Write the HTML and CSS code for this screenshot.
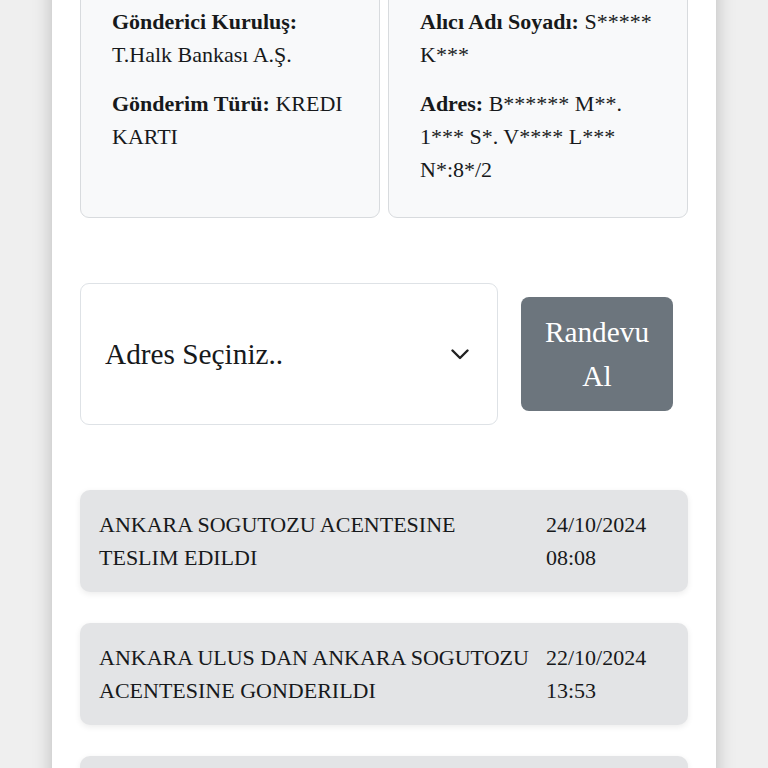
FILE: index.html
```html
<!DOCTYPE html>
<html lang="tr">
<head>
<meta charset="utf-8">
<title>Gönderi Takip</title>
<link rel="stylesheet" href="styles.css">
</head>
<body>
<main class="panel">
  <section class="info-row">
    <div class="info-card">
      <p><b>Gönderici Kuruluş:</b> T.Halk Bankası A.Ş.</p>
      <p><b>Gönderim Türü:</b> KREDI KARTI</p>
    </div>
    <div class="info-card">
      <p><b>Alıcı Adı Soyadı:</b> S***** K***</p>
      <p><b>Adres:</b> B****** M**. 1*** S*. V**** L*** N*:8*/2</p>
    </div>
  </section>

  <section class="address-row">
    <div class="select">
      <span>Adres Seçiniz..</span>
      <svg class="chevron" width="18" height="11" viewBox="0 0 18 11" aria-hidden="true">
        <polyline points="1.5,1.5 9,9 16.5,1.5" fill="none" stroke="#222" stroke-width="2.4" stroke-linecap="round" stroke-linejoin="round"/>
      </svg>
    </div>
    <div class="btn">Randevu Al</div>
  </section>

  <section class="timeline">
    <div class="item">
      <div class="item-text">ANKARA SOGUTOZU ACENTESINE TESLIM EDILDI</div>
      <div class="item-date">24/10/2024 08:08</div>
    </div>
    <div class="item">
      <div class="item-text">ANKARA ULUS DAN ANKARA SOGUTOZU ACENTESINE GONDERILDI</div>
      <div class="item-date">22/10/2024 13:53</div>
    </div>
    <div class="item">
      <div class="item-text">ANKARA ULUS ACENTESINE TESLIM ALINDI</div>
      <div class="item-date">22/10/2024 10:12</div>
    </div>
  </section>
</main>
</body>
</html>
```
FILE: styles.css
```css
html, body {
  margin: 0;
  padding: 0;
}

body {
  background: #efefef;
  font-family: "Liberation Serif", "Times New Roman", serif;
  color: #17191b;
  overflow: hidden;
}

.panel {
  width: 664px;
  min-height: 800px;
  margin: 0 auto;
  background: #ffffff;
  box-shadow: 0 0 18px rgba(0, 0, 0, 0.22);
  padding: 0 28px;
  box-sizing: border-box;
}

.info-row {
  display: grid;
  grid-template-columns: 1fr 1fr;
  gap: 8px;
  margin-top: -27px;
}

.info-card {
  background: #f8f9fa;
  border: 1px solid #d8dbde;
  border-radius: 9px;
  padding: 31px 31px 31px;
  font-size: 22px;
  line-height: 33px;
}

.info-card p {
  margin: 0 0 16px;
}

.info-card p:last-child {
  margin-bottom: 0;
}

.address-row {
  display: flex;
  align-items: center;
  gap: 23px;
  margin-top: 65px;
}

.select {
  flex: 0 0 418px;
  height: 142px;
  box-sizing: border-box;
  border: 1px solid #dee2e6;
  border-radius: 9px;
  background: #fff;
  display: flex;
  align-items: center;
  justify-content: space-between;
  padding: 0 28px 0 24px;
  font-size: 29.3px;
}

.chevron {
  display: block;
}

.btn {
  width: 152px;
  box-sizing: border-box;
  padding: 13px 22px;
  background: #6c757d;
  color: #fff;
  border-radius: 8px;
  font-size: 29.3px;
  line-height: 44px;
  text-align: center;
}

.timeline {
  display: flex;
  flex-direction: column;
  gap: 31px;
  margin-top: 65px;
}

.item {
  display: grid;
  grid-template-columns: 1fr 123px;
  column-gap: 10px;
  background: #e3e4e6;
  border-radius: 10px;
  padding: 18px 19px;
  font-size: 22px;
  line-height: 33px;
  box-shadow: 0 2px 6px rgba(0, 0, 0, 0.08);
}
```
